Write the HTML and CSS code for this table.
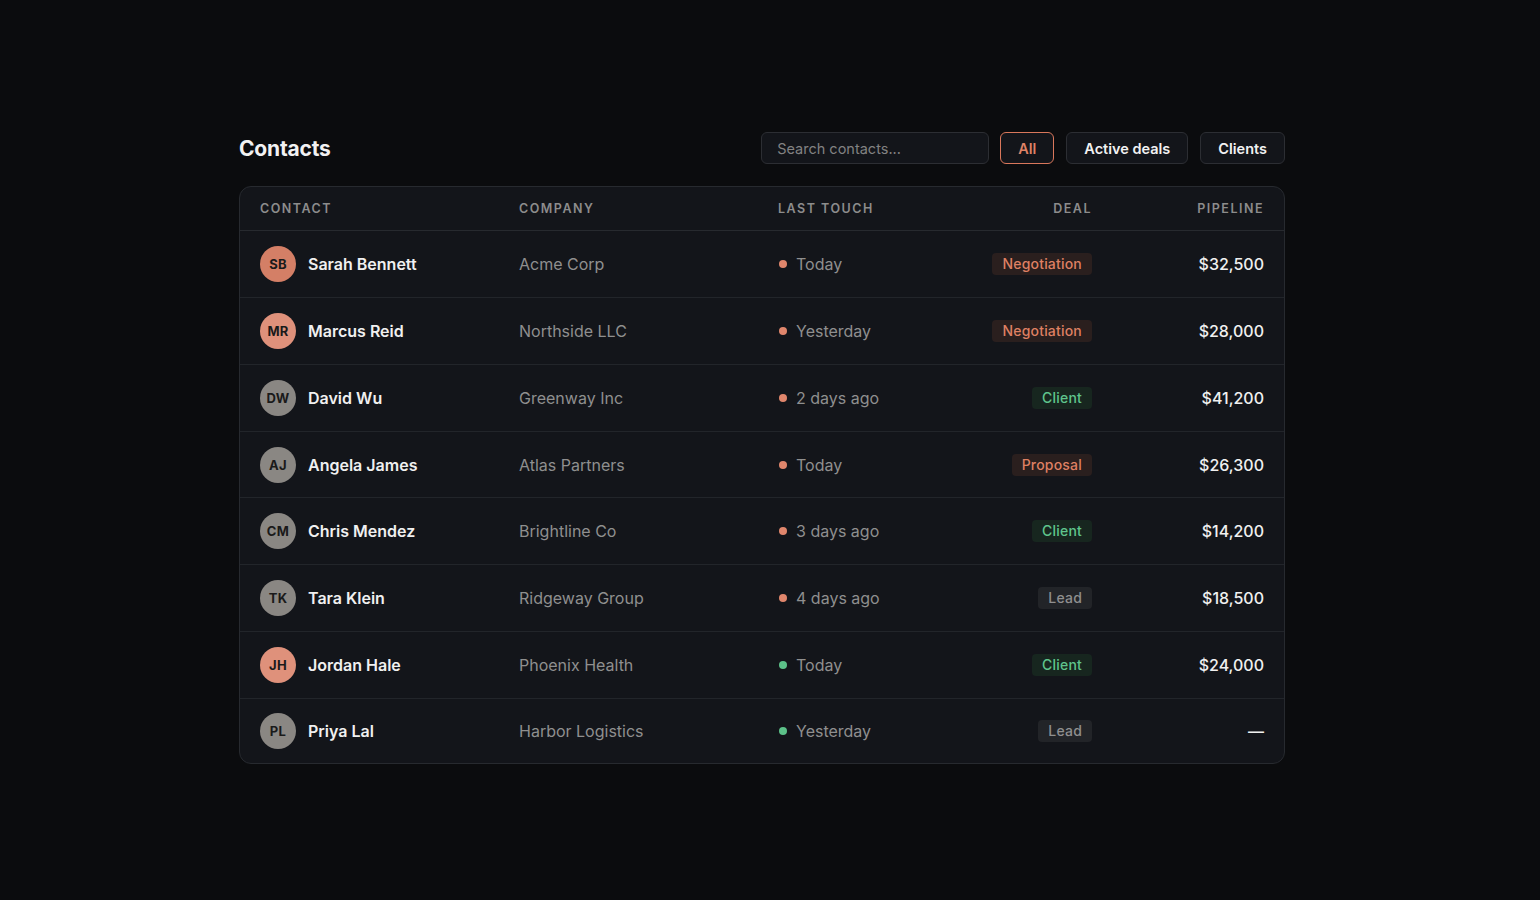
FILE: index.html
```html
<!DOCTYPE html>
<html lang="en">
<head>
<meta charset="utf-8">
<title>Contacts</title>
<link rel="stylesheet" href="styles.css">
</head>
<body>
<main class="page">
  <header class="toolbar">
    <h1 class="title">Contacts</h1>
    <div class="controls">
      <input class="search" type="text" placeholder="Search contacts...">
      <button class="btn btn-active">All</button>
      <button class="btn">Active deals</button>
      <button class="btn">Clients</button>
    </div>
  </header>
  <section class="card">
    <div class="row head">
      <div class="cell">Contact</div>
      <div class="cell">Company</div>
      <div class="cell">Last touch</div>
      <div class="cell right">Deal</div>
      <div class="cell right">Pipeline</div>
    </div>
    <div class="row">
      <div class="cell contact"><span class="avatar av-orange">SB</span><span class="name">Sarah Bennett</span></div>
      <div class="cell company">Acme Corp</div>
      <div class="cell touch"><span class="dot dot-orange"></span>Today</div>
      <div class="cell right"><span class="pill pill-orange">Negotiation</span></div>
      <div class="cell right amount">$32,500</div>
    </div>
    <div class="row">
      <div class="cell contact"><span class="avatar av-salmon">MR</span><span class="name">Marcus Reid</span></div>
      <div class="cell company">Northside LLC</div>
      <div class="cell touch"><span class="dot dot-orange"></span>Yesterday</div>
      <div class="cell right"><span class="pill pill-orange">Negotiation</span></div>
      <div class="cell right amount">$28,000</div>
    </div>
    <div class="row">
      <div class="cell contact"><span class="avatar av-gray">DW</span><span class="name">David Wu</span></div>
      <div class="cell company">Greenway Inc</div>
      <div class="cell touch"><span class="dot dot-orange"></span>2 days ago</div>
      <div class="cell right"><span class="pill pill-green">Client</span></div>
      <div class="cell right amount">$41,200</div>
    </div>
    <div class="row">
      <div class="cell contact"><span class="avatar av-gray">AJ</span><span class="name">Angela James</span></div>
      <div class="cell company">Atlas Partners</div>
      <div class="cell touch"><span class="dot dot-orange"></span>Today</div>
      <div class="cell right"><span class="pill pill-orange">Proposal</span></div>
      <div class="cell right amount">$26,300</div>
    </div>
    <div class="row">
      <div class="cell contact"><span class="avatar av-gray">CM</span><span class="name">Chris Mendez</span></div>
      <div class="cell company">Brightline Co</div>
      <div class="cell touch"><span class="dot dot-orange"></span>3 days ago</div>
      <div class="cell right"><span class="pill pill-green">Client</span></div>
      <div class="cell right amount">$14,200</div>
    </div>
    <div class="row">
      <div class="cell contact"><span class="avatar av-gray">TK</span><span class="name">Tara Klein</span></div>
      <div class="cell company">Ridgeway Group</div>
      <div class="cell touch"><span class="dot dot-orange"></span>4 days ago</div>
      <div class="cell right"><span class="pill pill-gray">Lead</span></div>
      <div class="cell right amount">$18,500</div>
    </div>
    <div class="row">
      <div class="cell contact"><span class="avatar av-salmon">JH</span><span class="name">Jordan Hale</span></div>
      <div class="cell company">Phoenix Health</div>
      <div class="cell touch"><span class="dot dot-green"></span>Today</div>
      <div class="cell right"><span class="pill pill-green">Client</span></div>
      <div class="cell right amount">$24,000</div>
    </div>
    <div class="row">
      <div class="cell contact"><span class="avatar av-gray">PL</span><span class="name">Priya Lal</span></div>
      <div class="cell company">Harbor Logistics</div>
      <div class="cell touch"><span class="dot dot-green"></span>Yesterday</div>
      <div class="cell right"><span class="pill pill-gray">Lead</span></div>
      <div class="cell right amount">—</div>
    </div>
  </section>
</main>
</body>
</html>
```

FILE: styles.css
```css
* { box-sizing: border-box; }
html, body { margin: 0; padding: 0; }
body {
  background: #0b0c0e;
  font-family: Inter, "Noto Sans", "Liberation Sans", sans-serif;
  color: #ececec;
  -webkit-font-smoothing: antialiased;
}
.page {
  width: 1046px;
  margin-left: calc(50% - 531px);
  padding-top: 132px;
}
.toolbar {
  display: flex;
  align-items: center;
  justify-content: space-between;
  height: 32px;
  margin-bottom: 22px;
}
.title {
  margin: 0;
  font-size: 21px;
  font-weight: 650;
  color: #f2f2f2;
  letter-spacing: -0.2px;
}
.controls {
  display: flex;
  align-items: center;
  gap: 12px;
}
.search {
  width: 228px;
  height: 32px;
  margin-right: -1px;
  background: #13151a;
  border: 1px solid #2c2e33;
  border-radius: 6px;
  padding: 0 15px;
  font-family: inherit;
  font-size: 14.5px;
  color: #ddd;
  outline: none;
}
.search::placeholder { color: #828282; }
.btn {
  height: 32px;
  padding: 0 17px;
  background: #13151a;
  border: 1px solid #2c2e33;
  border-radius: 6px;
  font-family: inherit;
  font-size: 14.5px;
  font-weight: 600;
  color: #f2f2f2;
}
.btn-active {
  color: #de8266;
  border-color: #d9775b;
}
.card {
  background: #13151a;
  border: 1px solid #272a2f;
  border-radius: 12px;
  overflow: hidden;
}
.row {
  display: grid;
  grid-template-columns: 259px 259px 177px 177px 172px;
  align-items: center;
  height: 66.86px;
  border-bottom: 1px solid #22252a;
}
.row:last-child {
  border-bottom: none;
  height: 64px;
}
.row.head {
  height: 44px;
  border-bottom: 1px solid #272a2f;
}
.cell {
  padding: 0 20px;
  font-size: 16px;
  white-space: nowrap;
}
.head .cell {
  font-size: 12.5px;
  font-weight: 600;
  letter-spacing: 1.5px;
  text-transform: uppercase;
  color: #8c8c8c;
}
.right { text-align: right; }
.contact {
  display: flex;
  align-items: center;
  gap: 12px;
}
.avatar {
  width: 36px;
  height: 36px;
  border-radius: 50%;
  display: inline-flex;
  align-items: center;
  justify-content: center;
  font-size: 13px;
  font-weight: 700;
  color: #1a1a1a;
  letter-spacing: 0.3px;
  flex: none;
}
.av-orange { background: #d47f66; }
.av-salmon { background: #df917b; }
.av-gray { background: #8a8783; }
.name {
  font-weight: 600;
  color: #f0f0f0;
}
.company { color: #8f8f8f; }
.touch {
  display: flex;
  align-items: center;
  gap: 9px;
  color: #8f8f8f;
}
.dot {
  width: 8px;
  height: 8px;
  border-radius: 50%;
  margin-left: 1px;
  flex: none;
}
.dot-orange { background: #e0866c; }
.dot-green { background: #5cc189; }
.pill {
  display: inline-block;
  font-size: 14px;
  font-weight: 500;
  line-height: 22px;
  padding: 0 10px;
  border-radius: 4px;
  letter-spacing: 0.2px;
}
.pill-orange { background: #2a1f1e; color: #df8063; }
.pill-green { background: #17261f; color: #5fc48c; }
.pill-gray { background: #222428; color: #8f8f8f; }
.amount {
  font-weight: 500;
  color: #f0f0f0;
}
```
